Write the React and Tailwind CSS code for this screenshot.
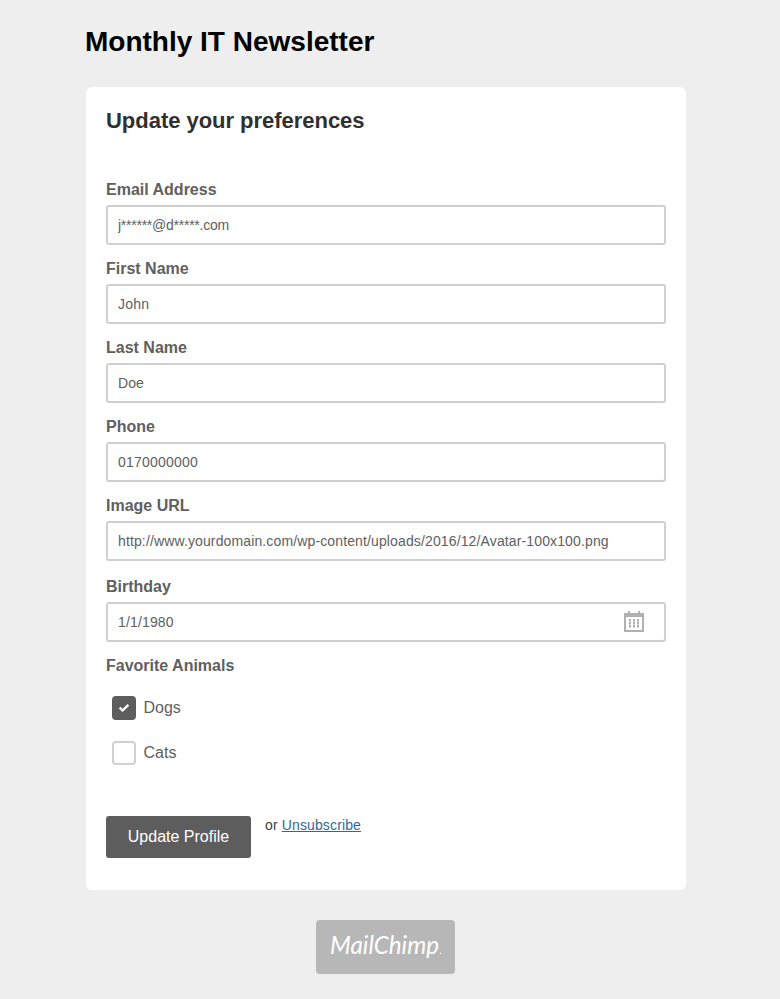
import React, { useState } from "react";

const initialFields = [
  { name: "email", label: "Email Address", value: "j******@d*****.com", tracking: "tracking-[-0.25px]" },
  { name: "fname", label: "First Name", value: "John", tracking: "tracking-[0.2px]" },
  { name: "lname", label: "Last Name", value: "Doe", tracking: "tracking-[0.1px]" },
  { name: "phone", label: "Phone", value: "0170000000", tracking: "tracking-[0.2px]" },
  {
    name: "image",
    label: "Image URL",
    value: "http://www.yourdomain.com/wp-content/uploads/2016/12/Avatar-100x100.png",
    tracking: "tracking-[0.13px]",
  },
];

function CalendarIcon() {
  return (
    <svg
      className="mb-px"
      width="20"
      height="21"
      viewBox="0 0 20 21"
      fill="#b0b0b0"
      shapeRendering="crispEdges"
    >
      <path d="M4 0h2v2h8V0h2v2h4v19H0V2h4zM2 6v13h16V6z" fillRule="evenodd" />
      <path d="M5 8h2v9H5zM9 8h2v9H9zM13 8h2v9h-2z" fill="#d4d4d4" />
      <path d="M5 8h2v2H5zM9 8h2v2H9zM13 8h2v2h-2zM5 11h2v2H5zM9 11h2v2H9zM13 11h2v2h-2zM5 14h2v2H5zM9 14h2v2H9zM13 14h2v2h-2z" />
    </svg>
  );
}

function Field({ label, value, tracking, onChange, children }) {
  return (
    <label className="block">
      <span className="block h-6 text-base leading-[26px] font-bold text-[#606060]">{label}</span>
      <span className="mt-1 flex h-10 items-center rounded-[3px] border-2 border-[#d0d0d0] bg-white pr-5 pl-2.5">
        <input
          type="text"
          className={`min-w-0 flex-1 text-sm text-[#606060] outline-none ${tracking}`}
          value={value}
          onChange={(e) => onChange(e.target.value)}
        />
        {children}
      </span>
    </label>
  );
}

function Checkbox({ label, checked, onChange }) {
  return (
    <label className="flex h-6 items-center gap-[7.5px] text-base text-[#606060]">
      <input type="checkbox" className="sr-only" checked={checked} onChange={onChange} />
      {checked ? (
        <span className="flex h-6 w-6 items-center justify-center rounded bg-[#5d5d5d]">
          <svg width="12" height="10" viewBox="0 0 12 10" fill="none" stroke="#fff" strokeWidth="2.3">
            <path d="M1.6 4.6 4.6 7.4 10.4 1.9" />
          </svg>
        </span>
      ) : (
        <span className="h-6 w-6 rounded border-2 border-[#d0d0d0] bg-white" />
      )}
      <span className="leading-6">{label}</span>
    </label>
  );
}

export default function App() {
  const [fields, setFields] = useState(initialFields);
  const [birthday, setBirthday] = useState("1/1/1980");
  const [dogs, setDogs] = useState(true);
  const [cats, setCats] = useState(false);

  const updateField = (name, value) => {
    setFields(fields.map((f) => (f.name === name ? { ...f, value } : f)));
  };

  return (
    <div className="min-h-screen bg-[#eeeeee] pt-5 pl-[86px] font-['Liberation_Sans',Arial,sans-serif]">
      <div className="w-[600px]">
        <h1 className="-ml-px h-[67px] text-[28px] leading-[44px] font-bold text-black">
          Monthly IT Newsletter
        </h1>

        <form
          className="h-[803px] rounded-md bg-white px-5 pt-[17px]"
          onSubmit={(e) => e.preventDefault()}
        >
          <h2 className="mb-10 text-[22px] leading-[33px] font-bold tracking-[-0.03px] text-[#303030]">
            Update your preferences
          </h2>

          <div className="space-y-[11px]">
            {fields.map((f) => (
              <Field
                key={f.name}
                label={f.label}
                value={f.value}
                tracking={f.tracking}
                onChange={(value) => updateField(f.name, value)}
              />
            ))}
          </div>

          <div className="mt-[13px]">
            <Field
              label="Birthday"
              value={birthday}
              tracking="tracking-[0.15px]"
              onChange={setBirthday}
            >
              <CalendarIcon />
            </Field>
          </div>

          {/* Interests */}
          <div className="mt-[11px]">
            <p className="h-6 text-base leading-[26px] font-bold text-[#606060]">
              Favorite Animals
            </p>
            <div className="mt-[19px] space-y-[21px] pl-1.5">
              <Checkbox label="Dogs" checked={dogs} onChange={() => setDogs(!dogs)} />
              <Checkbox label="Cats" checked={cats} onChange={() => setCats(!cats)} />
            </div>
          </div>

          {/* Actions */}
          <div className="mt-[51px] flex items-start gap-3.5">
            <button
              type="submit"
              className="h-[42px] w-[145px] rounded-[3px] bg-[#5d5d5d] text-base text-white"
            >
              Update Profile
            </button>
            <p className="text-sm leading-[18px] tracking-[0.13px] text-[#404040]">
              or{" "}
              <a href="#" className="text-[#336699] underline">
                Unsubscribe
              </a>
            </p>
          </div>
        </form>

        {/* Provider badge */}
        <div className="mt-[30px] ml-[230px] flex h-[54px] w-[139px] items-center justify-center rounded bg-[#b7b7b7]">
          <svg width="135" height="50" viewBox="0 0 135 50" role="img">
            <text
              x="12"
              y="32"
              textLength="109"
              lengthAdjust="spacingAndGlyphs"
              fill="#fff"
              className="font-['Brush_Script_MT','Segoe_Script',Lato,cursive] text-[25px] italic"
            >
              MailChimp
            </text>
            <circle cx="122.5" cy="31.5" r="0.7" fill="#fff" />
          </svg>
        </div>
      </div>
    </div>
  );
}
